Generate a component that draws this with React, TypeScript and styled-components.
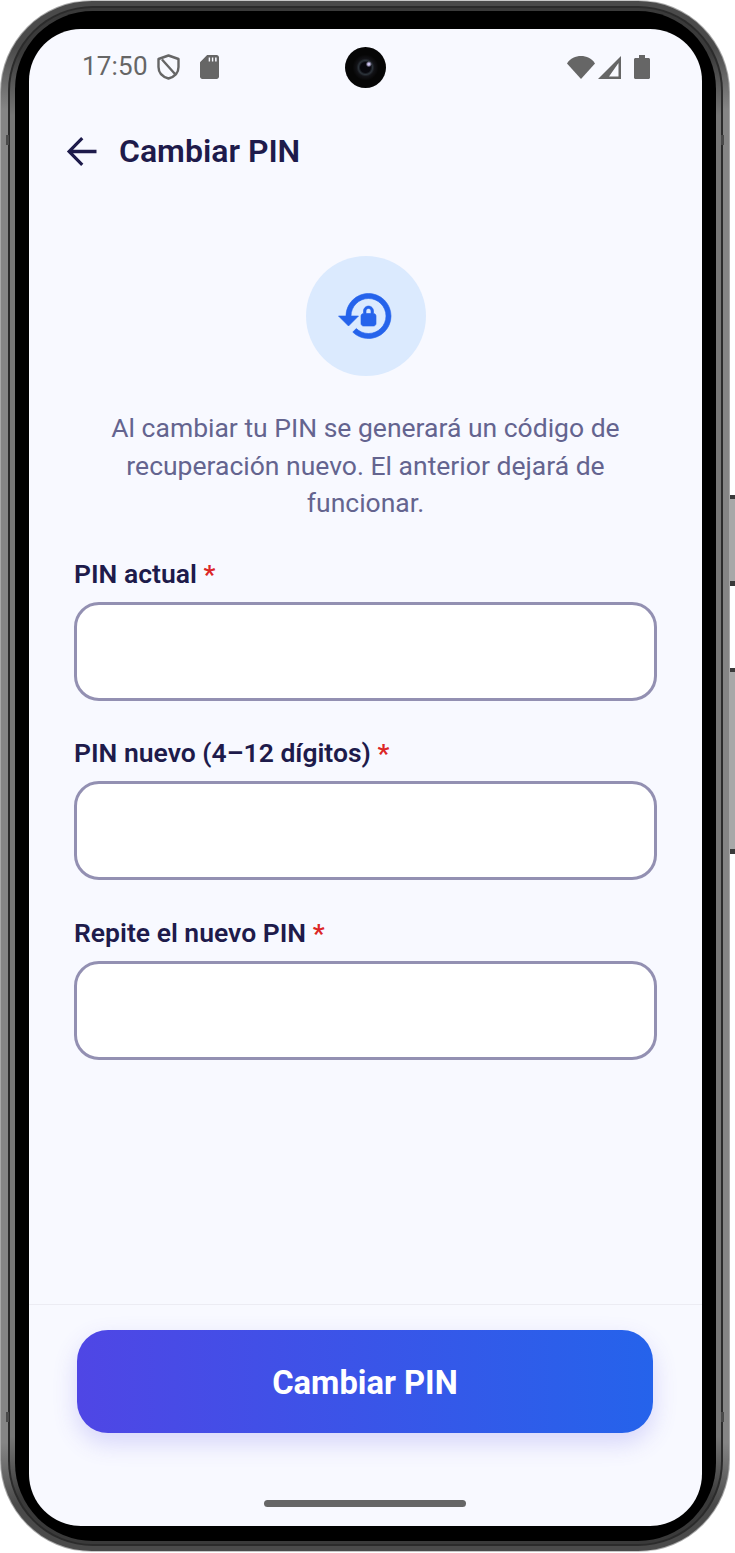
import styled, { createGlobalStyle } from "styled-components";

const GlobalStyle = createGlobalStyle`
  html, body {
    margin: 0;
    padding: 0;
    background: #fff;
  }
  * {
    box-sizing: border-box;
  }
`;

const Device = styled.div`
  position: relative;
  width: 730px;
  height: 1552px;
  padding: 1px;
  border-radius: 92px;
  background: linear-gradient(#c8c8c8 0 2px, #a8a8a8 2px calc(100% - 2px), #c8c8c8 calc(100% - 2px));
`;

const SideButton = styled.div<{ $top: number; $height: number }>`
  position: absolute;
  right: -5px;
  top: ${(p) => p.$top}px;
  width: 5px;
  height: ${(p) => p.$height}px;
  background: linear-gradient(#3a3a3a 0 4px, #a8a8a8 4px calc(100% - 5px), #3a3a3a calc(100% - 5px));
`;

const AntennaMark = styled.div<{ $side: "left" | "right"; $top: number }>`
  position: absolute;
  ${(p) => p.$side}: 6px;
  top: ${(p) => p.$top}px;
  width: 3px;
  height: 10px;
  background: #4a4a4a;
`;

const Rim = styled.div`
  width: 100%;
  height: 100%;
  padding: 5px 6px 5px 7px;
  border-radius: 91px;
  background: linear-gradient(#4a4a4a 0 3%, #858585 7% 93%, #4a4a4a 97%);
`;

const Band = styled.div`
  width: 100%;
  height: 100%;
  padding: 2px;
  border-radius: 85px;
  background: #2b2b2b;
`;

const Chamfer = styled.div`
  width: 100%;
  height: 100%;
  padding: 3px 5px;
  border-radius: 83px;
  background: linear-gradient(#3a3a3a 0 3%, #777 7% 93%, #3a3a3a 97%);
`;

const Bezel = styled.div`
  width: 100%;
  height: 100%;
  padding: 18px 14px 15px 14px;
  border-radius: 78px;
  background: #000;
`;

const Screen = styled.div`
  position: relative;
  display: flex;
  flex-direction: column;
  width: 100%;
  height: 100%;
  overflow: hidden;
  border-radius: 52px;
  background: #f8f9ff;
  font-family: Roboto, "Liberation Sans", sans-serif;
`;

const StatusBar = styled.div`
  display: flex;
  flex: none;
  align-items: center;
  justify-content: space-between;
  height: 76px;
  padding: 0 52px 1px 53px;
  color: #666;
`;

const StatusGroup = styled.div`
  display: flex;
  align-items: center;
`;

const Time = styled.span`
  margin: 0 9px 1px 0;
  font-size: 26px;
  letter-spacing: 0.2px;
`;

const StatusIcon = styled.svg<{ $gap?: number }>`
  display: block;
  flex: none;
  margin-right: ${(p) => p.$gap ?? 0}px;
  fill: currentColor;
`;

const Camera = styled.div`
  position: absolute;
  top: 18px;
  left: 316px;
  width: 41px;
  height: 41px;
  border-radius: 50%;
  background:
    radial-gradient(circle at 58% 42%, #cfc6f2 0 1px, transparent 3px),
    radial-gradient(circle at 50% 50%, #08080e 0 5px, #2c333a 7px, #121216 9px, #060606 13px);
`;

const Header = styled.header`
  display: flex;
  flex: none;
  align-items: center;
  height: 92px;
  padding-left: 30px;
  color: #1e1b4b;
`;

const BackIcon = styled.svg`
  display: block;
  flex: none;
  width: 45px;
  height: 45px;
  margin-right: 15px;
  fill: currentColor;
`;

const Title = styled.h1`
  margin: 0;
  font-size: 32px;
  font-weight: 600;
`;

const Main = styled.main`
  display: flex;
  flex: 1;
  flex-direction: column;
  align-items: center;
  padding: 59px 45px 0 45px;
`;

const IconCircle = styled.div`
  display: flex;
  align-items: center;
  justify-content: center;
  width: 120px;
  height: 120px;
  border-radius: 50%;
  background: #dbeafe;
`;

const LockResetIcon = styled.svg`
  display: block;
  width: 60px;
  height: 60px;
  fill: #2563eb;
  stroke: #2563eb;
  stroke-width: 0.25;
`;

const Description = styled.p`
  margin: 33px 0 34px;
  color: #64648f;
  font-size: 26.5px;
  line-height: 37.5px;
  text-align: center;
`;

const Field = styled.label`
  display: block;
  width: 100%;
  margin-bottom: 34.5px;
`;

const FieldLabel = styled.span`
  display: block;
  margin-bottom: 10px;
  color: #1e1b4b;
  font-size: 26.5px;
  font-weight: 600;
  line-height: 36px;
`;

const Required = styled.span`
  color: #dc2626;
`;

const PinInput = styled.input`
  display: block;
  width: 100%;
  height: 99px;
  border: 3px solid #9390b2;
  border-radius: 25px;
  background: #fff;
  outline: none;
`;

const Footer = styled.footer`
  display: flex;
  flex: none;
  flex-direction: column;
  align-items: center;
  height: 222px;
  padding: 25px 1px 0 0;
  border-top: 1px solid #ececf3;
`;

const SubmitButton = styled.button`
  width: 576px;
  height: 103px;
  padding: 3px 0 0;
  border: 0;
  border-radius: 31px;
  background: linear-gradient(90deg, #4f46e5, #2563eb);
  box-shadow: 0 10px 24px rgba(79, 70, 229, 0.2);
  color: #fff;
  font-family: inherit;
  font-size: 32.7px;
  font-weight: 700;
`;

const HomeBar = styled.div`
  width: 202px;
  height: 7px;
  margin-top: 67px;
  border-radius: 4px;
  background: #666;
`;

const fields = ["PIN actual", "PIN nuevo (4–12 dígitos)", "Repite el nuevo PIN"];

export default function App() {
  return (
    <>
      <GlobalStyle />
      <Device>
        <SideButton $top={495} $height={91} />
        <SideButton $top={668} $height={186} />
        <Rim>
          <Band>
            <Chamfer>
              <Bezel>
                <Screen>
                  <StatusBar>
                    <StatusGroup>
                      <Time>17:50</Time>
                      <StatusIcon $gap={20} width="23" height="26" viewBox="0 0 23 26">
                        <path
                          d="M11.5 1.5 21.5 5v8c0 5.6-4 9.8-10 11.5C5.5 22.8 1.5 18.6 1.5 13V5zM5 5.5 18 20"
                          fill="none"
                          stroke="currentColor"
                          strokeWidth="2.4"
                          strokeLinejoin="round"
                        />
                      </StatusIcon>
                      <StatusIcon width="19" height="24" viewBox="4 2 16 20" preserveAspectRatio="none">
                        <path d="M18 2h-8L4.02 8 4 20c0 1.1.9 2 2 2h12c1.1 0 2-.9 2-2V4c0-1.1-.9-2-2-2zm-5.5 5.5h-1.2V4h1.2v3.5zm2.7 0H14V4h1.2v3.5zm2.8 0h-1.300V4H18v3.500z" />
                      </StatusIcon>
                    </StatusGroup>
                    <StatusGroup>
                      <StatusIcon $gap={3} width="28" height="24" viewBox="0 0 28 24">
                        <path d="M0 8.500C3.500 3 8.500 1 14 1s10.500 2 14 7.500L14 24z" />
                      </StatusIcon>
                      <StatusIcon $gap={13} width="23" height="24" viewBox="0 0 23 24">
                        <path fillRule="evenodd" d="M0 24 23 1v23zM11 21.500h9.500V8z" />
                      </StatusIcon>
                      <StatusIcon width="16" height="24" viewBox="0 0 16 24">
                        <path d="M5 0h6v3h3.500c.8 0 1.500.7 1.500 1.500V22.500c0 .8-.7 1.500-1.500 1.500h-13C.7 24 0 23.300 0 22.500V4.500C0 3.700.7 3 1.500 3H5z" />
                      </StatusIcon>
                    </StatusGroup>
                  </StatusBar>
                  <Camera />
                  <Header>
                    <BackIcon viewBox="0 0 24 24">
                      <path d="M20 11.100H7.500l5.500-5.600L11.800 4.300 4.200 12l7.600 7.700 1.200-1.200-5.500-5.600H20z" />
                    </BackIcon>
                    <Title>Cambiar PIN</Title>
                  </Header>
                  <Main>
                    <IconCircle>
                      <LockResetIcon viewBox="0 0 24 24">
                        <path d="M13,3c-4.97,0-9,4.03-9,9H1l4,4l4-4H6c0-3.86,3.14-7,7-7s7,3.14,7,7s-3.14,7-7,7c-1.9,0-3.62-0.76-4.88-1.99L6.7,18.42 C8.32,20.01,10.55,21,13,21c4.97,0,9-4.03,9-9S17.97,3,13,3z M15,11v-1c0-1.1-0.9-2-2-2s-2,0.9-2,2v1c-0.55,0-1,0.45-1,1v3 c0,0.55,0.45,1,1,1h4c0.55,0,1-0.45,1-1v-3C16,11.45,15.55,11,15,11z M14,11h-2v-1c0-0.55,0.45-1,1-1s1,0.45,1,1V11z" />
                      </LockResetIcon>
                    </IconCircle>
                    <Description>
                      Al cambiar tu PIN se generará un código de recuperación nuevo. El anterior
                      dejará de funcionar.
                    </Description>
                    {fields.map((name) => (
                      <Field key={name}>
                        <FieldLabel>
                          {name} <Required>*</Required>
                        </FieldLabel>
                        <PinInput type="password" />
                      </Field>
                    ))}
                  </Main>
                  <Footer>
                    <SubmitButton>Cambiar PIN</SubmitButton>
                    <HomeBar />
                  </Footer>
                </Screen>
              </Bezel>
            </Chamfer>
          </Band>
        </Rim>
        <AntennaMark $side="left" $top={135} />
        <AntennaMark $side="right" $top={135} />
        <AntennaMark $side="left" $top={1412} />
        <AntennaMark $side="right" $top={1412} />
      </Device>
    </>
  );
}
